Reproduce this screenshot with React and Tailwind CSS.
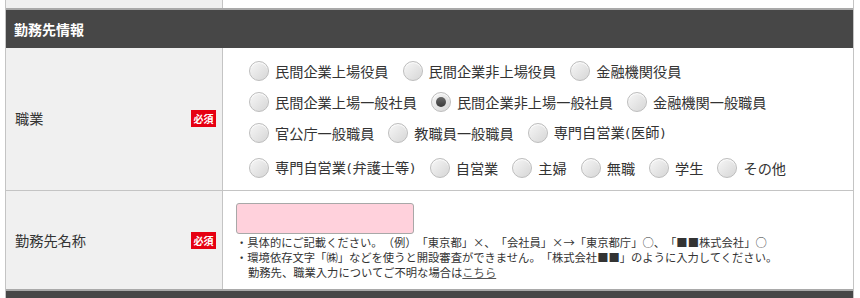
import React from "react";

function Label({ text }) {
  const parts = text.split(/([()])/);
  return (
    <span className="ml-[6px] text-[14.2px] leading-[20px] text-[#333]">
      {parts.map((p, i) =>
        p === "(" || p === ")" ? (
          <span key={i} className="font-['DejaVu_Sans',sans-serif] text-[13px] inline-block w-[6.5px] text-center">
            {p}
          </span>
        ) : (
          <React.Fragment key={i}>{p}</React.Fragment>
        )
      )}
    </span>
  );
}

function Radio({ label, checked }) {
  return (
    <label className="flex items-center mr-[14px] whitespace-nowrap">
      <span className="relative w-[20px] h-[20px] rounded-full border border-[#bdbdbd] bg-linear-to-br from-[#f7f7f7] to-[#d6d6d6] shadow-[inset_0_1px_1px_rgba(255,255,255,0.9)] flex items-center justify-center shrink-0">
        {checked && (
          <span className="w-[10px] h-[10px] rounded-full bg-linear-to-b from-[#6a6a6a] to-[#3a3a3a]" />
        )}
      </span>
      <Label text={label} />
    </label>
  );
}

function Badge() {
  return (
    <span className="w-[25px] h-[17px] bg-[#e60012] text-white text-[10px] font-bold leading-[17px] text-center">
      必須
    </span>
  );
}

const rows = [
  [["民間企業上場役員"], ["民間企業非上場役員"], ["金融機関役員"]],
  [["民間企業上場一般社員"], ["民間企業非上場一般社員", true], ["金融機関一般職員"]],
  [["官公庁一般職員"], ["教職員一般職員"], ["専門自営業(医師)"]],
  [["専門自営業(弁護士等)"], ["自営業"], ["主婦"], ["無職"], ["学生"], ["その他"]],
];

export default function App() {
  return (
    <div className="w-[860px] h-[298px] bg-white overflow-hidden font-['Noto_Sans_CJK_JP',sans-serif] text-[#333] [text-spacing-trim:space-all]">
      <div className="ml-[5px] w-[849px] border-x border-[#c4c4c4]">
        <div className="flex h-[10px] border-b-2 border-[#a9a9a9]">
          <div className="w-[217px] bg-[#f0f0f0] border-r border-[#c4c4c4]" />
          <div className="flex-1 bg-white" />
        </div>
        <div className="h-[38px] bg-[#474747] flex items-center pl-[8px] pb-[1px]">
          <span className="text-white text-[14px] font-bold leading-[20px]">勤務先情報</span>
        </div>
        <div className="flex h-[143px] border-b border-[#c4c4c4]">
          <div className="w-[217px] bg-[#f0f0f0] border-r border-[#c4c4c4] flex items-center justify-between pl-[9px] pr-[6px] pb-[2px]">
            <span className="text-[14.2px] leading-[20px]">職業</span>
            <Badge />
          </div>
          <div className="flex-1 pl-[26px] pt-[7px] flex flex-col">
            {rows.map((r, i) => (
              <div key={i} className={(i === 3 ? "h-[35px] pt-[4px] " : "h-[31px] ") + "flex items-center"}>
                {r.map(([l, c]) => (
                  <Radio key={l} label={l} checked={c} />
                ))}
              </div>
            ))}
          </div>
        </div>
        <div className="flex h-[98px]">
          <div className="w-[217px] bg-[#f0f0f0] border-r border-[#c4c4c4] flex items-center justify-between pl-[9px] pr-[6px]">
            <span className="text-[14.2px] leading-[20px]">勤務先名称</span>
            <Badge />
          </div>
          <div className="flex-1 pl-[13px] pt-[12px]">
            <div className="w-[178px] h-[31px] bg-[#ffd1dc] border border-[#a8a8a8] rounded-[3px]" />
            <div className="mt-[1px] text-[11.3px] leading-[15px] text-[#333] whitespace-nowrap">
              <div>・具体的にご記載ください。（例）「東京都」×、「会社員」×→「東京都庁」○、「■■株式会社」○</div>
              <div>・環境依存文字「㈱」などを使うと開設審査ができません。「株式会社■■」のように入力してください。</div>
              <div className="pl-[12px]">
                勤務先、職業入力についてご不明な場合は<span className="underline text-[#555]">こちら</span>
              </div>
            </div>
          </div>
        </div>
        <div className="h-[12px] border-t-2 border-[#a9a9a9] bg-[#474747]" />
      </div>
    </div>
  );
}
